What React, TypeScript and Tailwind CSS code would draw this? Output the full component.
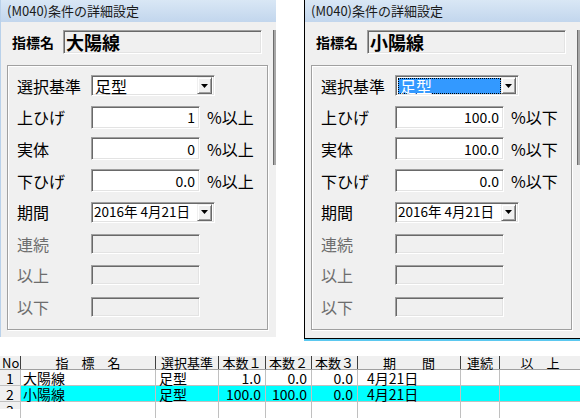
import React from "react";

// Sunken Win32-style edit field
const sunken =
  "border border-t-[#a0a0a0] border-l-[#a0a0a0] border-r-white border-b-white shadow-[inset_1px_1px_0_#696969,inset_-1px_-1px_0_#e3e3e3]";

function DropButton() {
  return (
    <div className="mr-[2px] flex h-[17px] w-[15px] items-center justify-center border border-t-[#f0f0f0] border-l-[#f0f0f0] border-r-[#696969] border-b-[#696969] bg-[#f0f0f0] shadow-[inset_1px_1px_0_#fff,inset_-1px_-1px_0_#a0a0a0]">
      <svg width="7" height="4" viewBox="0 0 7 4">
        <path d="M0 0h7L3.5 4z" fill="#000" />
      </svg>
    </div>
  );
}

function Combo({ text, selected }: { text: string; selected?: boolean }) {
  return (
    <div className={`flex h-[21px] w-[124px] items-center justify-between bg-white ${sunken}`}>
      {selected ? (
        <div className="ml-[2px] flex h-[16px] w-[104px] items-center border border-dotted border-[#000] bg-[#3399ff] pl-[1px] text-[16px] leading-none text-white">
          {text}
        </div>
      ) : (
        <span className="pl-[3px] text-[16px] leading-none">{text}</span>
      )}
      <DropButton />
    </div>
  );
}

function DateBox() {
  return (
    <div className={`flex h-[21px] w-[124px] items-center justify-between bg-white ${sunken}`}>
      <span className="pl-[2px] text-[13.5px] leading-none">2016年 4月21日</span>
      <DropButton />
    </div>
  );
}

function Row({ children }: { children: React.ReactNode }) {
  return <div className="flex h-[31.6px] items-center pl-[9px]">{children}</div>;
}

function Label({ text, off }: { text: string; off?: boolean }) {
  return (
    <div className={`w-[74px] text-[16px] leading-none ${off ? "text-[#6d6d6d]" : "text-black"}`}>
      {text}
    </div>
  );
}

function Field({ value, suffix }: { value: string; suffix: string }) {
  return (
    <>
      <div className={`flex h-[23px] w-[109px] items-center justify-end bg-white pr-[4px] text-[14px] leading-none ${sunken}`}>
        {value}
      </div>
      <span className="ml-[7px] text-[16px] leading-none">{suffix}</span>
    </>
  );
}

function OffField() {
  return <div className={`h-[20px] w-[109px] bg-[#f0f0f0] ${sunken}`} />;
}

function Dialog({
  name,
  values,
  suffix,
  selected,
}: {
  name: string;
  values: string[];
  suffix: string;
  selected?: boolean;
}) {
  return (
    <div className="relative h-full w-[275px] bg-[#f0f0f0]">
      <div className="flex h-[22px] items-center bg-linear-to-b from-[#d9e7f5] to-[#c2d6ed] pl-[6px] text-[13px] text-[#1a1a1a]">
        (M040)条件の詳細設定
      </div>
      <div className="pt-[8px]">
        <div className="flex items-center">
          <div className="w-[62px] pl-[11px] text-[14px] font-bold leading-none">指標名</div>
          <div className={`flex h-[24px] w-[199px] items-center bg-[#f0f0f0] pl-[2px] text-[18px] font-bold leading-none ${sunken}`}>
            {name}
          </div>
        </div>
        <div className="ml-[6px] mt-[11px] h-[265px] w-[261px] border border-[#a0a0a0] pt-[4px] shadow-[inset_1px_1px_0_#fff,1px_1px_0_#fff]">
          <Row>
            <Label text="選択基準" />
            <Combo text="足型" selected={selected} />
          </Row>
          <Row>
            <Label text="上ひげ" />
            <Field value={values[0]} suffix={suffix} />
          </Row>
          <Row>
            <Label text="実体" />
            <Field value={values[1]} suffix={suffix} />
          </Row>
          <Row>
            <Label text="下ひげ" />
            <Field value={values[2]} suffix={suffix} />
          </Row>
          <Row>
            <Label text="期間" />
            <DateBox />
          </Row>
          <Row>
            <Label text="連続" off />
            <OffField />
          </Row>
          <Row>
            <Label text="以上" off />
            <OffField />
          </Row>
          <Row>
            <Label text="以下" off />
            <OffField />
          </Row>
        </div>
      </div>
      {/* scrollbar edge peeking in at the right */}
      <div className="absolute right-0 top-[30px] h-[135px] w-[3px] border-l border-[#6d6d6d] bg-[#a8a8a8]" />
    </div>
  );
}

const cols = "grid grid-cols-[21px_135px_63px_47px_46px_46px_103px_39px_80px]";

const rows = [
  { no: "1", name: "大陽線", basis: "足型", n1: "1.0", n2: "0.0", n3: "0.0", date: "4月21日", hl: false },
  { no: "2", name: "小陽線", basis: "足型", n1: "100.0", n2: "100.0", n3: "0.0", date: "4月21日", hl: true },
];

function Table() {
  const heads = ["No", "指　標　名", "選択基準", "本数１", "本数２", "本数３", "期　　間", "連続", "以　上"];
  return (
    <div className="text-[14px] leading-[14px]">
      <div className={`${cols} h-[14px] border-b border-[#a0a0a0] bg-[#f0f0f0] text-[13px] leading-[13px]`}>
        {heads.map((h, i) => (
          <div
            key={h}
            className={`flex items-center ${i === 0 ? "pl-[2px]" : "justify-center"} ${i < 8 ? "border-r border-[#404040]" : ""}`}
          >
            {h}
          </div>
        ))}
      </div>
      {rows.map((r) => (
        <div key={r.no} className={`${cols} h-[16px] border-b border-[#c0c0c0] ${r.hl ? "bg-[#00ffff]" : "bg-white"}`}>
          <div className="flex items-center justify-center border-r border-[#c0c0c0] bg-[#f0f0f0]">{r.no}</div>
          <div className="flex items-center border-r border-[#c0c0c0] pl-[2px]">{r.name}</div>
          <div className="flex items-center border-r border-[#c0c0c0] pl-[3px]">{r.basis}</div>
          <div className="flex items-center justify-end border-r border-[#c0c0c0] pr-[4px]">{r.n1}</div>
          <div className="flex items-center justify-end border-r border-[#c0c0c0] pr-[4px]">{r.n2}</div>
          <div className="flex items-center justify-end border-r border-[#c0c0c0] pr-[4px]">{r.n3}</div>
          <div className="flex items-center border-r border-[#c0c0c0] pl-[9px]">{r.date}</div>
          <div className="border-r border-[#c0c0c0]" />
          <div />
        </div>
      ))}
      <div className={`${cols} h-[7px] overflow-hidden bg-white`}>
        <div className="flex justify-center overflow-hidden border-r border-[#c0c0c0] bg-[#f0f0f0] pt-[1px]">3</div>
        {[0, 1, 2, 3, 4, 5, 6].map((i) => (
          <div key={i} className="border-r border-[#c0c0c0]" />
        ))}
        <div />
      </div>
      <div className={`${cols} h-[20px] bg-white`}>
        <div className="border-r border-[#c0c0c0]" />
        {[0, 1, 2, 3, 4, 5, 6].map((i) => (
          <div key={i} className="border-r border-[#c0c0c0]" />
        ))}
        <div />
      </div>
    </div>
  );
}

export default function App() {
  return (
    <div className="relative h-[418px] w-[580px] overflow-hidden bg-white font-['Noto_Sans_CJK_JP',sans-serif] text-black">
      <div className="flex h-[341px] items-start">
        <div className="h-[337px] border-l border-[#b9d1ea]">
          <Dialog name="大陽線" values={["1", "0", "0.0"]} suffix="%以上" />
        </div>
        <div className="w-[29px]" />
        <div className="flex flex-col">
          <div className="h-[339px] border-b border-l border-black">
            <Dialog name="小陽線" values={["100.0", "100.0", "0.0"]} suffix="%以下" selected />
          </div>
          <div className="h-[2px] bg-[#5bc8ef]" />
        </div>
      </div>
      <div className="mt-[15px]">
        <Table />
      </div>
    </div>
  );
}
